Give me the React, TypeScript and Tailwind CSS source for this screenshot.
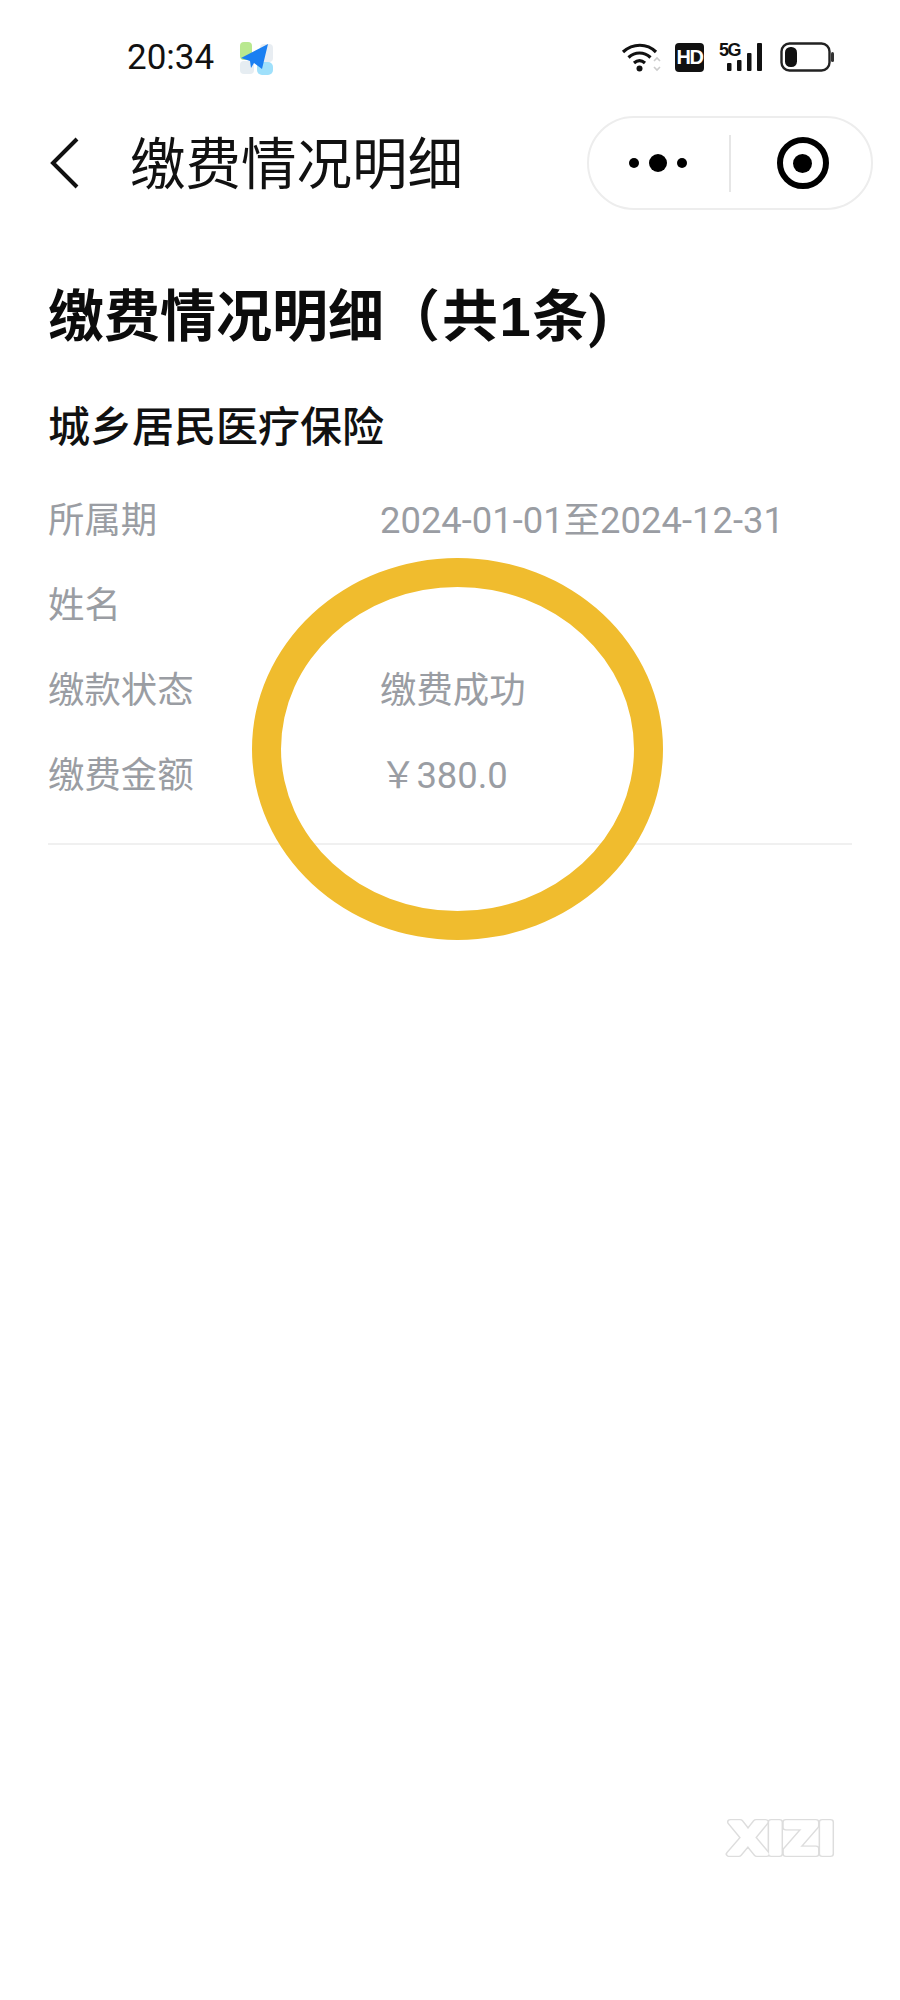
const rows = [
  { label: '所属期', value: '2024-01-01至2024-12-31' },
  { label: '姓名', value: '' },
  { label: '缴款状态', value: '缴费成功' },
  { label: '缴费金额', value: '￥380.0' },
];

const fontStack = "font-['Roboto','Noto_Sans_CJK_SC',sans-serif]";

const StatusBar = () => (
  <div className="flex h-[116px] items-start justify-between pl-[127px] pr-[65px] pt-[37px]">
    <div className="flex items-center">
      <span className="text-[35px] leading-[42px] text-[#111]">20:34</span>
      <svg className="ml-[24px]" width="38" height="36" viewBox="0 0 38 36">
        <rect x="2" y="2" width="12" height="18" rx="4" fill="#b9e88f" />
        <rect x="2" y="21" width="14" height="13" rx="4" fill="#e6edf2" />
        <rect x="22" y="4" width="13" height="18" rx="4" fill="#e8edf2" />
        <rect x="19" y="22" width="16" height="13" rx="5" fill="#9fe0fb" />
        <path d="M3 18 L30 4 L24 29 L16 23 L13 28 L12 21 Z" fill="#1a7ff2" />
      </svg>
    </div>
    <div className="flex items-center gap-[12px] pt-[5px]">
      <svg width="42" height="30" viewBox="0 0 42 30">
        <path d="M2 10 C12 1 26 1 35 10" fill="none" stroke="#111" strokeWidth="3.2" />
        <path d="M7.5 15.5 C14 9.5 23 9.5 29.5 15.5" fill="none" stroke="#111" strokeWidth="3.2" />
        <path d="M13 21 C16.5 18 20.5 18 24 21" fill="none" stroke="#111" strokeWidth="3.2" />
        <circle cx="18.5" cy="26.5" r="3" fill="#111" />
        <path d="M33 19 L36 16 L39 19 M33 25 L36 28 L39 25" fill="none" stroke="#ccc" strokeWidth="1.6" />
      </svg>
      <span className="flex h-[29px] w-[29px] items-center justify-center rounded-[4px] bg-[#111] text-[20px] font-bold tracking-[-1.5px] text-white font-['Liberation_Sans',sans-serif]">
        HD
      </span>
      <div className="relative ml-[4px] h-[29px] w-[43px]">
        <span className="absolute left-[-1px] top-[-2px] text-[18px] font-bold leading-[19px] tracking-[-1.5px] text-[#111] font-['Liberation_Sans',sans-serif]">
          5G
        </span>
        <svg className="absolute left-0 top-0" width="43" height="29" viewBox="0 0 43 29">
          <rect x="7" y="20" width="4.5" height="8" rx="1" fill="#111" />
          <rect x="17" y="17" width="4.5" height="11" rx="1" fill="#111" />
          <rect x="27" y="10" width="4.5" height="18" rx="1" fill="#111" />
          <rect x="37" y="0" width="5" height="28" rx="1" fill="#111" />
        </svg>
      </div>
      <svg className="ml-[5px]" width="55" height="30" viewBox="0 0 55 30">
        <rect x="1.5" y="1.5" width="48" height="27" rx="8" fill="none" stroke="#222" strokeWidth="2.4" />
        <rect x="5" y="5" width="12" height="20" rx="5.5" fill="#111" />
        <rect x="51" y="10" width="3" height="10" rx="1.5" fill="#333" />
      </svg>
    </div>
  </div>
);

const NavBar = () => (
  <div className="flex h-[94px] items-center pl-[50px] pr-[27px]">
    <svg width="30" height="52" viewBox="0 0 30 52" fill="none">
      <path d="M27 2 L3 26 L27 50" stroke="#111" strokeWidth="4" />
    </svg>
    <h2 className="ml-[50px] mt-[5px] text-[55.5px] font-normal leading-[66px] text-[#111]">缴费情况明细</h2>
    <div className="ml-auto flex h-[94px] w-[286px] items-center rounded-full border-2 border-[#ededed]">
      <div className="flex w-[140px] items-center justify-center gap-[10px] pr-[2px]">
        <span className="h-[10px] w-[10px] rounded-full bg-black" />
        <span className="h-[18px] w-[18px] rounded-full bg-black" />
        <span className="h-[10px] w-[10px] rounded-full bg-black" />
      </div>
      <div className="h-[57px] w-[2px] bg-[#e6e6e6]" />
      <div className="flex flex-1 items-center justify-center pl-[3px]">
        <div className="flex h-[52px] w-[52px] items-center justify-center rounded-full border-[6px] border-black">
          <span className="h-[19px] w-[19px] rounded-full bg-black" />
        </div>
      </div>
    </div>
  </div>
);

const Watermark = () => (
  <svg className="absolute left-[713px] top-[1805px]" width="140" height="70" viewBox="0 0 140 70">
    <text x="15" y="49" fontFamily="Inter" fontWeight="700" fontSize="44" textLength="106" lengthAdjust="spacingAndGlyphs" stroke="#dddddd" strokeWidth="6" strokeLinejoin="round" fill="#dddddd">
      XIZI
    </text>
    <text x="15" y="49" fontFamily="Inter" fontWeight="700" fontSize="44" textLength="106" lengthAdjust="spacingAndGlyphs" stroke="#ffffff" strokeWidth="3.5" strokeLinejoin="round" fill="#ffffff">
      XIZI
    </text>
  </svg>
);

export default function App() {
  return (
    <div className={`relative h-[2000px] w-[900px] overflow-hidden bg-white ${fontStack}`}>
      <StatusBar />
      <NavBar />
      <main className="px-[48px] pt-[75px]">
        <h1 className="text-[56px] font-bold leading-[64px] text-[#0c0c0c]">
          缴费情况明细（<span className="ml-[2px]">共</span>
          <span className="px-[1.5px] font-['Liberation_Sans',sans-serif]">1</span>条)
        </h1>
        <h3 className="mt-[54px] text-[42px] font-medium leading-[50px] text-[#111]">城乡居民医疗保险</h3>
        <div className="mt-[26px] border-b-2 border-[#f0f0f0] pb-[24px]">
          {rows.map((row) => (
            <div key={row.label} className="flex h-[85px] items-center text-[36.4px] text-[#9a9da3]">
              <span className="w-[332px]">{row.label}</span>
              <span>{row.value}</span>
            </div>
          ))}
        </div>
      </main>
      {/* hand-drawn marker over the screenshot */}
      <div className="absolute left-[252px] top-[558px] h-[382px] w-[411px] rounded-[50%] border-[29px] border-[#f0bc2e]" />
      <Watermark />
    </div>
  );
}
